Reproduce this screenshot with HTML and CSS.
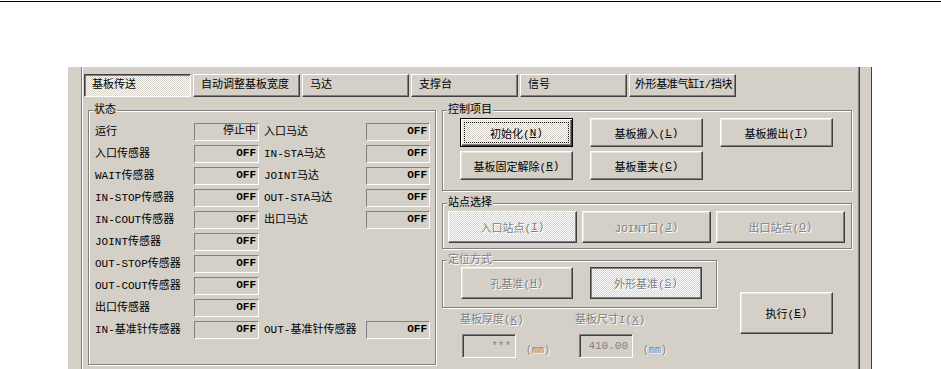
FILE: index.html
```html
<!DOCTYPE html>
<html lang="zh-CN">
<head>
  <meta charset="UTF-8" />
  <title>基板传送</title>
  <link rel="stylesheet" href="styles.css">
</head>
<body>

  <div class="topline"></div>

  <div class="dialog">
    <div class="tabctl">

      <div class="tabs">
        <div class="tab active">基板传送</div>
        <div class="tab">自动调整基板宽度</div>
        <div class="tab">马达</div>
        <div class="tab">支撑台</div>
        <div class="tab">信号</div>
        <div class="tab tight">外形基准气缸I/挡块</div>
      </div>

      <div class="page">

        <!-- 状态 -->
        <div class="group status">
          <span class="caption">状态</span>
          <div class="grid">
            <span class="lbl">运行</span><span class="val cjk">停止中</span>
            <span class="lbl2">入口马达</span><span class="val">OFF</span>

            <span class="lbl">入口传感器</span><span class="val">OFF</span>
            <span class="lbl2">IN-STA马达</span><span class="val">OFF</span>

            <span class="lbl">WAIT传感器</span><span class="val">OFF</span>
            <span class="lbl2">JOINT马达</span><span class="val">OFF</span>

            <span class="lbl">IN-STOP传感器</span><span class="val">OFF</span>
            <span class="lbl2">OUT-STA马达</span><span class="val">OFF</span>

            <span class="lbl">IN-COUT传感器</span><span class="val">OFF</span>
            <span class="lbl2">出口马达</span><span class="val">OFF</span>

            <span class="lbl">JOINT传感器</span><span class="val">OFF</span>
            <span class="lbl">OUT-STOP传感器</span><span class="val">OFF</span>
            <span class="lbl">OUT-COUT传感器</span><span class="val">OFF</span>
            <span class="lbl">出口传感器</span><span class="val">OFF</span>

            <span class="lbl">IN-基准针传感器</span><span class="val">OFF</span>
            <span class="lbl2">OUT-基准针传感器</span><span class="val">OFF</span>
          </div>
        </div>

        <div class="side">

          <!-- 控制项目 -->
          <div class="group ctrl">
            <span class="caption">控制项目</span>
            <div class="btn-grid">
              <div class="btn default">初始化(<u>N</u>)</div>
              <div class="btn">基板搬入(<u>L</u>)</div>
              <div class="btn">基板搬出(<u>T</u>)</div>
              <div class="btn">基板固定解除(<u>R</u>)</div>
              <div class="btn">基板重夹(<u>C</u>)</div>
            </div>
          </div>

          <!-- 站点选择 -->
          <div class="group station">
            <span class="caption">站点选择</span>
            <div class="btn-row">
              <div class="btn disabled checked">入口站点(<u>I</u>)</div>
              <div class="btn disabled">JOINT口(<u>J</u>)</div>
              <div class="btn disabled">出口站点(<u>O</u>)</div>
            </div>
          </div>

          <div class="bottom">
            <div class="bottom-left">
              <!-- 定位方式 -->
              <div class="group locate">
                <span class="caption disabled-text">定位方式</span>
                <div class="btn-row">
                  <div class="btn disabled">孔基准(<u>H</u>)</div>
                  <div class="btn disabled pressed">外形基准(<u>S</u>)</div>
                </div>
              </div>

              <div class="fields">
                <div class="field">
                  <div class="field-lbl disabled-text">基板厚度(<u>K</u>)</div>
                  <div class="field-row">
                    <div class="edit">***</div>
                    <span class="unit disabled-text">(mm)</span>
                  </div>
                </div>
                <div class="field">
                  <div class="field-lbl disabled-text">基板尺寸I(<u>X</u>)</div>
                  <div class="field-row">
                    <div class="edit">410.00</div>
                    <span class="unit disabled-text">(mm)</span>
                  </div>
                </div>
              </div>
            </div>

            <div class="btn run">执行(<u>E</u>)</div>
          </div>

        </div>
      </div>

    </div>
  </div>

</body>
</html>
```

FILE: styles.css
```css
html,
body {
  margin: 0;
  overflow: hidden;
  background-color: #fff;
}

body {
  font-family: "Liberation Mono", "Noto Sans CJK SC", monospace;
  font-size: 11px;
  color: #000;
}

u {
  text-decoration: underline;
}

.topline {
  height: 1px;
  margin-top: 1px;
  background-color: #000;
}

.dialog {
  margin: 65px 0 0 68px;
  width: 804px;
  height: 320px;
  padding-left: 13px;
  box-sizing: border-box;
  background-color: #d4d0c8;
  border-right: 1px solid #404040;
}

.tabctl {
  width: 779px;
  height: 100%;
  box-sizing: border-box;
  border-left: 1px solid #808080;
  border-right: 1px solid #404040;
  box-shadow: inset 1px 0 #fff, inset -1px 0 #808080;
}

/* pestañas tipo botón */
.tabs {
  display: flex;
  gap: 2px;
  padding: 7px 0 0 2px;
}

.tab {
  width: 107px;
  height: 23px;
  box-sizing: border-box;
  padding-left: 7px;
  line-height: 21px;
  white-space: nowrap;
  overflow: hidden;
  border: 1px solid;
  border-color: #fff #404040 #404040 #fff;
  box-shadow: inset -1px -1px #808080;
}

.tab.tight {
  padding-left: 5px;
  letter-spacing: -0.4px;
}

.tab.active {
  border-color: #404040 #fff #fff #404040;
  box-shadow: inset 1px 1px #808080;
  background: repeating-conic-gradient(#fff 0 25%, #d4d0c8 0 50%) 0 0 / 2px 2px;
}

.page {
  display: flex;
  gap: 6px;
  padding: 13px 0 0 6px;
}

/* marco grabado */
.group {
  position: relative;
  box-sizing: border-box;
  border: 1px solid #808080;
  box-shadow: inset 1px 1px #fff, 1px 1px #fff;
}

.caption {
  position: absolute;
  top: -7px;
  left: 4px;
  padding: 0 1px;
  line-height: 12px;
  background-color: #d4d0c8;
}

.status {
  width: 348px;
  height: 255px;
  padding: 12px 0 0 6px;
}

.grid {
  display: grid;
  grid-template-columns: 99px 65px 107px 64px;
  grid-auto-rows: 18px;
  row-gap: 4px;
}

.lbl,
.lbl2 {
  line-height: 18px;
  white-space: nowrap;
}

.lbl {
  grid-column: 1;
}

.lbl2 {
  grid-column: 3;
  padding-left: 5px;
}

.val {
  box-sizing: border-box;
  border: 1px solid;
  border-color: #808080 #fff #fff #808080;
  padding-right: 2px;
  text-align: right;
  line-height: 14px;
  font-weight: bold;
}

.val.cjk {
  font-weight: normal;
}

.side {
  width: 410px;
}

.ctrl {
  height: 81px;
  padding: 7px 0 0 17px;
}

.btn-grid {
  display: grid;
  grid-template-columns: repeat(3, 113px);
  grid-auto-rows: 29px;
  column-gap: 17px;
  row-gap: 4px;
}

/* botones clásicos */
.btn {
  display: flex;
  align-items: center;
  justify-content: center;
  box-sizing: border-box;
  white-space: nowrap;
  background-color: #d4d0c8;
  border: 1px solid;
  border-color: #fff #404040 #404040 #fff;
  box-shadow: inset -1px -1px #808080, inset 1px 1px #e8e6e2;
}

.btn.default {
  border-color: #000;
  box-shadow: inset 1px 1px #fff, inset -1px -1px #404040, inset -2px -2px #808080;
  background: repeating-conic-gradient(#fff 0 25%, #d4d0c8 0 50%) 0 0 / 2px 2px;
  outline: 1px dotted #000;
  outline-offset: -5px;
}

.btn.checked {
  background: repeating-conic-gradient(#fff 0 25%, #d4d0c8 0 50%) 0 0 / 2px 2px;
}

.btn.pressed {
  border-color: #404040;
  box-shadow: inset 1px 1px #808080, inset -1px -1px #808080;
  background: repeating-conic-gradient(#fff 0 25%, #d4d0c8 0 50%) 0 0 / 2px 2px;
}

.btn.disabled,
.disabled-text {
  color: #808080;
  text-shadow: 1px 1px 0 #fff;
}

.station {
  margin-top: 12px;
  height: 46px;
  padding: 7px 0 0 5px;
}

.btn-row {
  display: flex;
  gap: 5px;
}

.station .btn {
  width: 129px;
  height: 32px;
}

.bottom {
  display: flex;
  margin-top: 11px;
}

.bottom-left {
  width: 275px;
}

.locate {
  height: 48px;
  padding: 6px 0 0 18px;
}

.locate .btn-row {
  gap: 17px;
}

.locate .btn {
  width: 112px;
  height: 32px;
}

.fields {
  display: flex;
  margin-top: 6px;
  padding-left: 18px;
}

.field {
  width: 115px;
}

.field-lbl {
  line-height: 12px;
  white-space: nowrap;
}

.field-row {
  display: flex;
  align-items: center;
  gap: 10px;
  margin-top: 8px;
  padding-left: 2px;
}

.field + .field .field-row {
  padding-left: 4px;
}

.edit {
  width: 54px;
  height: 24px;
  box-sizing: border-box;
  border: 1px solid;
  border-color: #808080 #fff #fff #808080;
  box-shadow: inset 1px 1px #404040;
  padding: 0 4px 0 0;
  line-height: 22px;
  text-align: right;
  color: #808080;
}

.unit {
  font-size: 10px;
  margin-top: 8px;
}

.btn.run {
  width: 93px;
  height: 42px;
  margin: 32px 0 0 23px;
}
```
